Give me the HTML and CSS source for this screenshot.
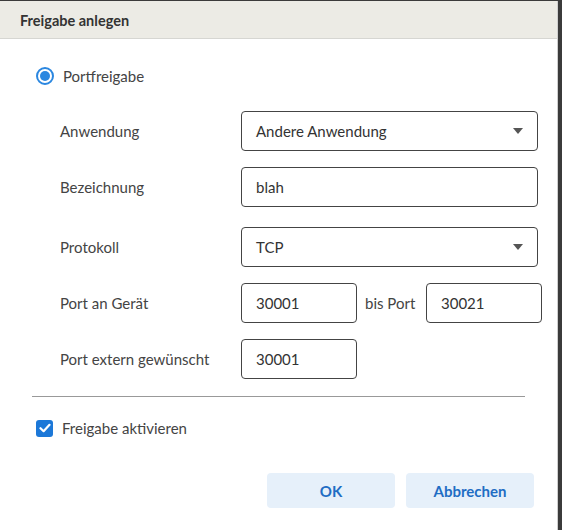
FILE: index.html
```html
<!DOCTYPE html>
<html lang="de">
<head>
    <meta charset="UTF-8">
    <meta name="viewport" content="width=device-width, initial-scale=1.0">
    <title>Freigabe anlegen</title>
    <link rel="stylesheet" href="styles.css">
</head>
<body>
    <div class="dialog">
        <div class="dialog-header">Freigabe anlegen</div>

        <div class="dialog-body">
            <label class="radio-row">
                <span class="radio"><span class="radio-dot"></span></span>
                <span class="option-label">Portfreigabe</span>
            </label>

            <div class="form">
                <div class="form-row">
                    <div class="form-label">Anwendung</div>
                    <div class="field select wide">
                        <span>Andere Anwendung</span>
                        <span class="caret"></span>
                    </div>
                </div>
                <div class="form-row">
                    <div class="form-label">Bezeichnung</div>
                    <div class="field wide"><span>blah</span></div>
                </div>
                <div class="form-row spaced">
                    <div class="form-label">Protokoll</div>
                    <div class="field select wide">
                        <span>TCP</span>
                        <span class="caret"></span>
                    </div>
                </div>
                <div class="form-row">
                    <div class="form-label">Port an Gerät</div>
                    <div class="field port"><span>30001</span></div>
                    <div class="between">bis Port</div>
                    <div class="field port"><span>30021</span></div>
                </div>
                <div class="form-row">
                    <div class="form-label">Port extern gewünscht</div>
                    <div class="field port"><span>30001</span></div>
                </div>
            </div>

            <hr class="divider">

            <label class="check-row">
                <span class="checkbox">
                    <svg width="12" height="10" viewBox="0 0 12 10">
                        <path d="M1.5 5.2 L4.6 8.2 L10.5 1.8" fill="none" stroke="#fff" stroke-width="2.2" stroke-linecap="round" stroke-linejoin="round"/>
                    </svg>
                </span>
                <span class="option-label">Freigabe aktivieren</span>
            </label>

            <div class="actions">
                <button class="btn">OK</button>
                <button class="btn">Abbrechen</button>
            </div>
        </div>
    </div>
</body>
</html>
```

FILE: styles.css
```css
* {
    margin: 0;
    padding: 0;
    box-sizing: border-box;
    font-family: 'Lato', 'Noto Sans', sans-serif;
}

body {
    background: #3b3b3b;
    width: 562px;
    height: 530px;
    overflow: hidden;
}

.dialog {
    width: 558px;
    height: 530px;
    margin-top: 1px;
    background: white;
    border-right: 1px solid #cfcfcf;
}

.dialog-header {
    height: 38px;
    background: #ecebe5;
    border-bottom: 1px solid #d6d6d2;
    padding-left: 20px;
    padding-top: 1px;
    display: flex;
    align-items: center;
    font-size: 14.5px;
    font-weight: bold;
    color: #333;
}

.dialog-body {
    padding-top: 28px;
}

.radio-row,
.check-row {
    display: flex;
    align-items: center;
    gap: 9px;
    padding-left: 36px;
}

.radio {
    width: 18px;
    height: 18px;
    border: 2px solid #2b87e0;
    border-radius: 50%;
    display: flex;
    align-items: center;
    justify-content: center;
}

.radio-dot {
    width: 10px;
    height: 10px;
    border-radius: 50%;
    background: #2b87e0;
}

.option-label {
    font-size: 15px;
    color: #444;
}

.form {
    padding-top: 26px;
    padding-left: 60px;
    display: flex;
    flex-direction: column;
    gap: 16px;
}

.form-row {
    display: flex;
    align-items: center;
}

.form-row.spaced {
    margin-top: 4px;
}

.form-label {
    width: 181px;
    font-size: 15px;
    color: #444;
}

.field {
    height: 40px;
    border: 1px solid #444;
    border-radius: 4px;
    padding: 0 14px;
    display: flex;
    align-items: center;
    justify-content: space-between;
    font-size: 15px;
    color: #333;
}

.field.wide {
    width: 297px;
}

.field.port {
    width: 116px;
}

.caret {
    width: 0;
    height: 0;
    border-left: 5px solid transparent;
    border-right: 5px solid transparent;
    border-top: 6px solid #555;
}

.between {
    width: 69px;
    padding-left: 8px;
    font-size: 15px;
    color: #444;
}

.divider {
    margin: 17px 0 0 32px;
    width: 493px;
    border: none;
    border-top: 1px solid #999;
}

.check-row {
    margin-top: 22px;
}

.checkbox {
    width: 17px;
    height: 17px;
    border-radius: 3px;
    background: #1c78d8;
    display: flex;
    align-items: center;
    justify-content: center;
}

.actions {
    margin-top: 36px;
    padding-right: 23px;
    display: flex;
    justify-content: flex-end;
    gap: 11px;
}

.btn {
    width: 128px;
    height: 35px;
    background: #e6f0fa;
    border: none;
    border-radius: 4px;
    color: #1f6dc4;
    font-size: 15px;
    font-weight: bold;
    cursor: pointer;
}
```
